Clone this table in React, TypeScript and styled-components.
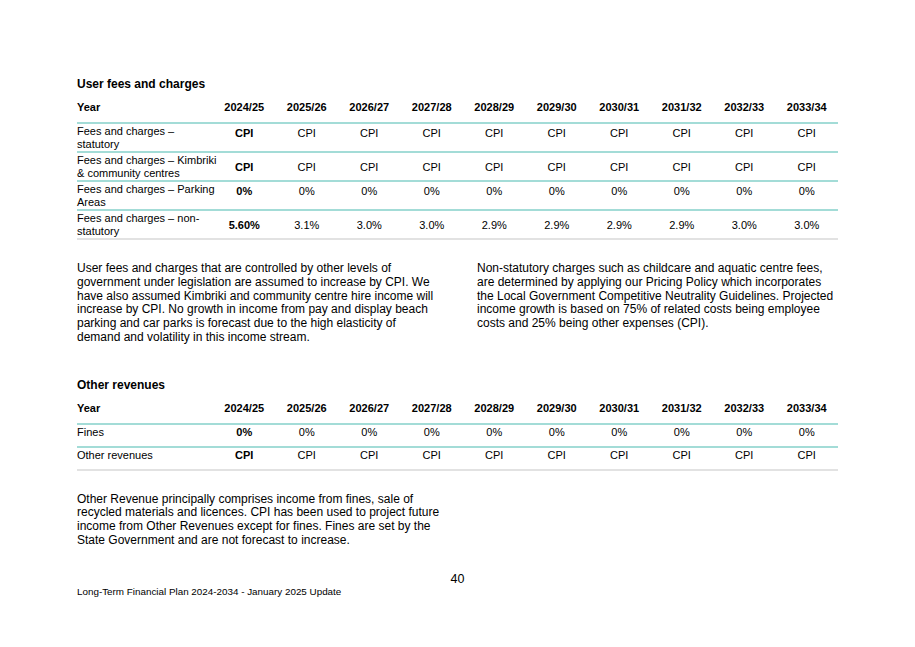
import React from "react";
import styled, { createGlobalStyle } from "styled-components";

const GlobalStyle = createGlobalStyle`
  html, body {
    margin: 0;
    padding: 0;
    background: #ffffff;
  }
  body {
    font-family: "Liberation Sans", Arial, sans-serif;
    color: #000000;
  }
`;

const TEAL = "#a3dcd7";
const GREY = "#e2e2e2";

const Page = styled.div`
  width: 915px;
  min-height: 647px;
  box-sizing: border-box;
  padding: 76px 77px 0 77px;
  display: flex;
  flex-direction: column;
`;

const SectionTitle = styled.h2<{ $gap: number }>`
  margin: ${(p) => p.$gap}px 0 4px 0;
  font-size: 12px;
  line-height: 16px;
  font-weight: 700;
`;

const Table = styled.div<{ $label: number }>`
  display: grid;
  grid-template-columns: ${(p) => p.$label}px repeat(10, 1fr);
  width: 761px;
`;

const HeadRow = styled.div`
  display: contents;
`;

const HeadCell = styled.div<{ $first?: boolean }>`
  font-size: 11px;
  line-height: 14px;
  font-weight: 700;
  padding: 4px 0 8px 0;
  text-align: ${(p) => (p.$first ? "left" : "center")};
  border-bottom: 2px solid ${TEAL};
`;

const DataRow = styled.div`
  display: contents;
`;

const LabelCell = styled.div<{ $h: number; $last?: boolean }>`
  font-size: 11px;
  line-height: 12.5px;
  padding-top: 1px;
  white-space: nowrap;
  min-height: ${(p) => p.$h}px;
  box-sizing: border-box;
  border-bottom: 2px solid ${(p) => (p.$last ? GREY : TEAL)};
`;

const ValueCell = styled.div<{
  $h: number;
  $last?: boolean;
  $bold?: boolean;
  $top?: number | null;
}>`
  font-size: 11px;
  line-height: 12px;
  font-weight: ${(p) => (p.$bold ? 700 : 400)};
  text-align: center;
  min-height: ${(p) => p.$h}px;
  box-sizing: border-box;
  display: flex;
  justify-content: center;
  align-items: ${(p) => (p.$top != null ? "flex-start" : "center")};
  padding-top: ${(p) => (p.$top != null ? p.$top : 0)}px;
  border-bottom: 2px solid ${(p) => (p.$last ? GREY : TEAL)};
`;

const Notes = styled.div<{ $cols: number; $gap: number }>`
  display: grid;
  grid-template-columns: repeat(${(p) => p.$cols}, 361px);
  column-gap: 39px;
  margin-top: ${(p) => p.$gap}px;
`;

const Para = styled.p<{ $lh: number }>`
  margin: 0;
  font-size: 12px;
  line-height: ${(p) => p.$lh}px;
  white-space: nowrap;
`;

const PageNumber = styled.div`
  margin-top: 25px;
  text-align: center;
  font-size: 12.5px;
  line-height: 14px;
`;

const FooterText = styled.div`
  font-size: 9.85px;
  line-height: 12px;
`;

const years = [
  "2024/25",
  "2025/26",
  "2026/27",
  "2027/28",
  "2028/29",
  "2029/30",
  "2030/31",
  "2031/32",
  "2032/33",
  "2033/34",
];

type RowData = { label: string[]; values: string[]; top: number | null };

const feeRows: RowData[] = [
  {
    label: ["Fees and charges –", "statutory"],
    values: ["CPI", "CPI", "CPI", "CPI", "CPI", "CPI", "CPI", "CPI", "CPI", "CPI"],
    top: 3,
  },
  {
    label: ["Fees and charges – Kimbriki", "& community centres"],
    values: ["CPI", "CPI", "CPI", "CPI", "CPI", "CPI", "CPI", "CPI", "CPI", "CPI"],
    top: null,
  },
  {
    label: ["Fees and charges – Parking", "Areas"],
    values: ["0%", "0%", "0%", "0%", "0%", "0%", "0%", "0%", "0%", "0%"],
    top: 3,
  },
  {
    label: ["Fees and charges – non-", "statutory"],
    values: ["5.60%", "3.1%", "3.0%", "3.0%", "2.9%", "2.9%", "2.9%", "2.9%", "3.0%", "3.0%"],
    top: null,
  },
];

const otherRows: RowData[] = [
  {
    label: ["Fines"],
    values: ["0%", "0%", "0%", "0%", "0%", "0%", "0%", "0%", "0%", "0%"],
    top: 1,
  },
  {
    label: ["Other revenues"],
    values: ["CPI", "CPI", "CPI", "CPI", "CPI", "CPI", "CPI", "CPI", "CPI", "CPI"],
    top: 1,
  },
];

function RateTable({ rows, rowH }: { rows: RowData[]; rowH: number }) {
  return (
    <Table $label={136}>
      <HeadRow>
        <HeadCell $first>Year</HeadCell>
        {years.map((y) => (
          <HeadCell key={y}>{y}</HeadCell>
        ))}
      </HeadRow>
      {rows.map((r, i) => {
        const last = i === rows.length - 1;
        return (
          <DataRow key={i}>
            <LabelCell $h={rowH} $last={last}>
              {r.label.map((l, j) => (
                <React.Fragment key={j}>
                  {j > 0 && <br />}
                  {l}
                </React.Fragment>
              ))}
            </LabelCell>
            {r.values.map((v, j) => (
              <ValueCell key={j} $h={rowH} $last={last} $bold={j === 0} $top={r.top}>
                {v}
              </ValueCell>
            ))}
          </DataRow>
        );
      })}
    </Table>
  );
}

function Lines({ lines, lh }: { lines: string[]; lh: number }) {
  return (
    <Para $lh={lh}>
      {lines.map((l, i) => (
        <React.Fragment key={i}>
          {i > 0 && <br />}
          {l}
        </React.Fragment>
      ))}
    </Para>
  );
}

export default function App() {
  return (
    <>
      <GlobalStyle />
      <Page>
        <SectionTitle $gap={0}>User fees and charges</SectionTitle>
        <RateTable rows={feeRows} rowH={29} />
        <Notes $cols={2} $gap={22}>
          <Lines
            lh={13.8}
            lines={[
              "User fees and charges that are controlled by other levels of",
              "government under legislation are assumed to increase by CPI. We",
              "have also assumed Kimbriki and community centre hire income will",
              "increase by CPI. No growth in income from pay and display beach",
              "parking and car parks is forecast due to the high elasticity of",
              "demand and volatility in this income stream.",
            ]}
          />
          <Lines
            lh={13.8}
            lines={[
              "Non-statutory charges such as childcare and aquatic centre fees,",
              "are determined by applying our Pricing Policy which incorporates",
              "the Local Government Competitive Neutrality Guidelines. Projected",
              "income growth is based on 75% of related costs being employee",
              "costs and 25% being other expenses (CPI).",
            ]}
          />
        </Notes>
        <SectionTitle $gap={32}>Other revenues</SectionTitle>
        <RateTable rows={otherRows} rowH={23} />
        <Notes $cols={1} $gap={22}>
          <Lines
            lh={13.6}
            lines={[
              "Other Revenue principally comprises income from fines, sale of",
              "recycled materials and licences. CPI has been used to project future",
              "income from Other Revenues except for fines. Fines are set by the",
              "State Government and are not forecast to increase.",
            ]}
          />
        </Notes>
        <PageNumber>40</PageNumber>
        <FooterText>Long-Term Financial Plan 2024-2034 - January 2025 Update</FooterText>
      </Page>
    </>
  );
}
